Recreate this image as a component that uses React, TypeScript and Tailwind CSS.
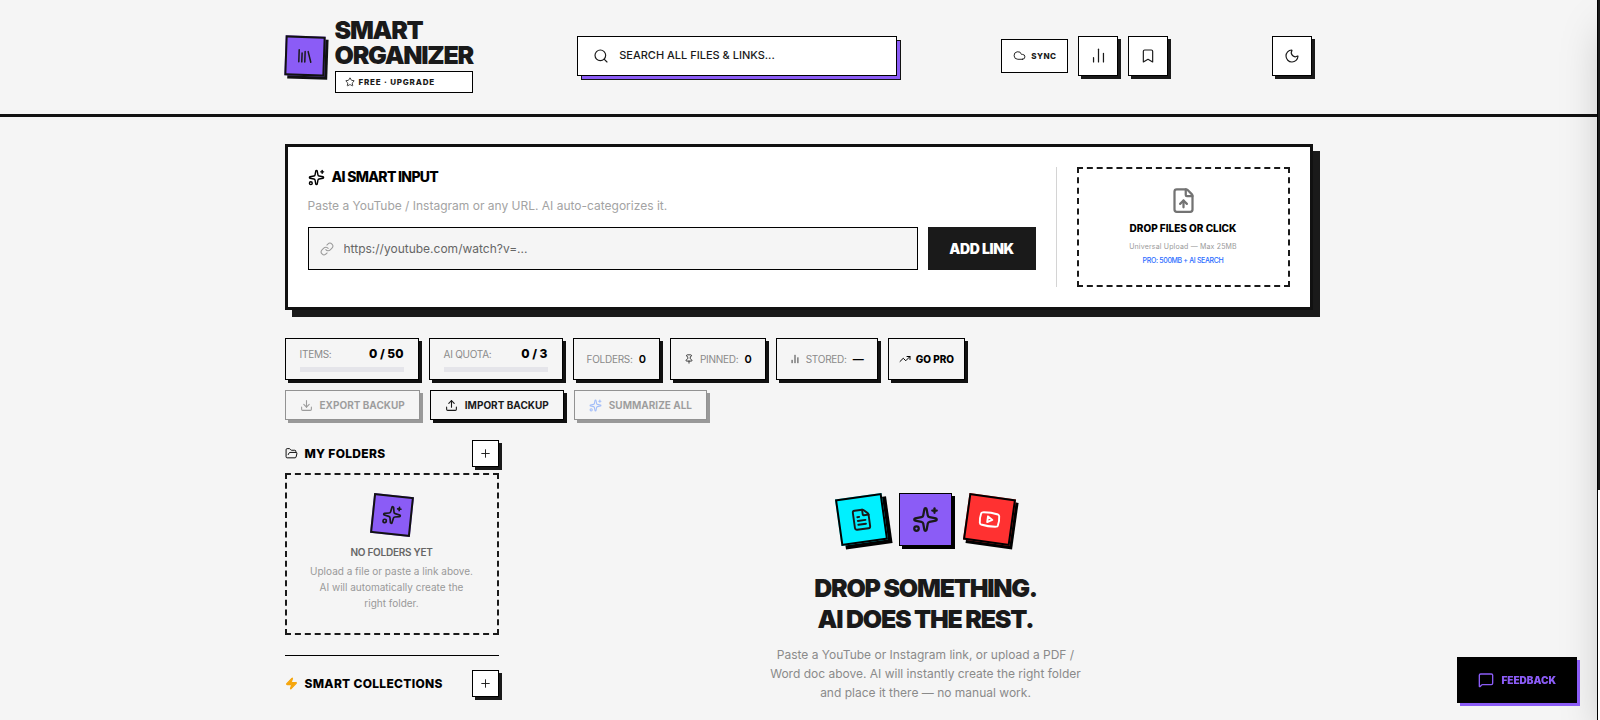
import type { ReactNode } from "react"
import {
  Bookmark,
  ChartNoAxesColumn,
  Cloud,
  Download,
  FileText,
  FileUp,
  FolderOpen,
  Library,
  Link,
  MessageSquare,
  Moon,
  Pin,
  Plus,
  Search,
  Sparkles,
  Star,
  TrendingUp,
  Upload,
  Youtube,
  Zap,
} from "lucide-react"

function IconButton({ label, children }: { label: string; children: ReactNode }) {
  return (
    <button
      type="button"
      aria-label={label}
      className="w-10 h-10 flex items-center justify-center bg-white border border-black shadow-[3px_3px_0_#1a1a1a]"
    >
      {children}
    </button>
  )
}

function Header() {
  return (
    <header className="border-b-3 border-[#111111] px-5">
      <div className="max-w-[1028px] mx-auto pt-[18px] pb-[21px] flex items-center justify-between">
        <div className="flex items-center gap-[10px]">
          <div className="w-10 h-10 rotate-2 flex items-center justify-center bg-[#8b5cf6] border-2 border-[#111111] shadow-[3px_3px_0_#111111]">
            <Library size={18} strokeWidth={2} />
          </div>
          <div>
            <h1 className="text-[25px] leading-[25px] font-black tracking-tighter">
              SMART
              <br />
              ORGANIZER
            </h1>
            <button
              type="button"
              className="mt-[3px] w-full h-[22px] px-[9px] flex items-center gap-1 bg-white border border-black text-[8px] font-extrabold tracking-widest"
            >
              <Star size={10} strokeWidth={2} />
              FREE · UPGRADE
            </button>
          </div>
        </div>

        <label className="w-80 h-10 px-[15px] flex items-center gap-[10px] bg-white border border-black shadow-[4px_4px_0_-1px_#8b5cf6,4px_4px_0_#111111]">
          <Search size={16} strokeWidth={1.75} />
          <input
            type="text"
            aria-label="Search all files and links"
            placeholder="SEARCH ALL FILES & LINKS..."
            className="flex-1 min-w-0 bg-transparent text-[11px] font-medium outline-none placeholder:text-[#1a1a1a]"
          />
        </label>

        <div className="flex items-center gap-[10px]">
          <button
            type="button"
            className="h-[34px] px-[11px] flex items-center gap-[5px] bg-white border border-black text-[8px] font-extrabold tracking-wider"
          >
            <Cloud size={13} strokeWidth={1.75} />
            SYNC
          </button>
          <IconButton label="Statistics">
            <ChartNoAxesColumn size={17} strokeWidth={1.75} />
          </IconButton>
          <IconButton label="Bookmarks">
            <Bookmark size={16} strokeWidth={1.75} />
          </IconButton>
        </div>

        <IconButton label="Dark mode">
          <Moon size={16} strokeWidth={1.75} />
        </IconButton>
      </div>
    </header>
  )
}

function SmartInput() {
  return (
    <section className="p-5 flex gap-5 bg-white border-3 border-[#111111] shadow-[7px_7px_0_#1a1a1a]">
      <form className="flex-1 min-w-0" onSubmit={(e) => e.preventDefault()}>
        <h2 className="flex items-center gap-[7px] text-sm leading-5 font-extrabold tracking-tighter text-black">
          <Sparkles size={17} strokeWidth={2} />
          AI SMART INPUT
        </h2>
        <p className="mt-[10px] text-xs leading-[18px] text-[#a3a3a3]">
          Paste a YouTube / Instagram or any URL. AI auto-categorizes it.
        </p>
        <div className="mt-3 flex gap-[10px]">
          <label className="flex-1 min-w-0 h-[43px] px-[11px] flex items-center gap-[10px] bg-[#f5f5f5] border border-black">
            <Link size={14} strokeWidth={1.75} className="text-[#999999]" />
            <input
              type="url"
              aria-label="Link to add"
              placeholder="https://youtube.com/watch?v=..."
              className="flex-1 min-w-0 bg-transparent text-xs outline-none placeholder:text-[#666666]"
            />
          </label>
          <button type="submit" className="w-[108px] h-[43px] bg-[#1a1a1a] text-white text-sm font-black tracking-tight">
            ADD LINK
          </button>
        </div>
      </form>
      <div className="pl-5 border-l border-[#d4d4d4]">
        <button
          type="button"
          className="w-[213px] h-[120px] flex flex-col items-center justify-center border-2 border-dashed border-[#1a1a1a]"
        >
          <FileUp size={27} strokeWidth={2} className="text-[#737373]" />
          <span className="mt-[6px] text-[10px] leading-4 font-extrabold text-black">DROP FILES OR CLICK</span>
          <span className="mt-[5px] text-[7px] leading-3 tracking-wide text-[#999999]">Universal Upload — Max 25MB</span>
          <span className="mt-[2px] text-[7px] leading-3 font-medium tracking-tighter text-[#2b6cff]">
            PRO: 500MB + AI SEARCH
          </span>
        </button>
      </div>
    </section>
  )
}

function Meter({ label, value }: { label: string; value: string }) {
  return (
    <div className="w-[134px] px-[14px] flex flex-col justify-center gap-[5px] border border-black shadow-[3px_3px_0_#111111]">
      <div className="flex items-center justify-between">
        <span className="text-[10px] leading-4 tracking-tight text-[#8a8a8a]">{label}</span>
        <span className="text-xs leading-4 font-extrabold text-black">{value}</span>
      </div>
      <div className="h-[5px] bg-[#e5e5ea]" />
    </div>
  )
}

function Stat({ icon, label, value }: { icon?: ReactNode; label: string; value: string }) {
  return (
    <div className="px-[13px] flex items-center gap-[6px] border border-black shadow-[3px_3px_0_#111111]">
      {icon}
      <span className="text-[10px] tracking-tight text-[#8a8a8a]">{label}</span>
      <span className="text-[11px] font-semibold text-black">{value}</span>
    </div>
  )
}

function ActionButton({ icon, label, disabled }: { icon: ReactNode; label: string; disabled?: boolean }) {
  return (
    <button
      type="button"
      disabled={disabled}
      className="h-[30px] px-[14px] flex items-center gap-[7px] border border-black shadow-[3px_3px_0_#111111] text-[10px] font-bold disabled:opacity-40"
    >
      {icon}
      {label}
    </button>
  )
}

function SidebarHeading({ icon, title, action }: { icon: ReactNode; title: string; action: string }) {
  return (
    <div className="flex items-center justify-between">
      <h2 className="flex items-center gap-[7px] text-xs font-extrabold tracking-wide text-black">
        {icon}
        {title}
      </h2>
      <button
        type="button"
        aria-label={action}
        className="w-[27px] h-[27px] flex items-center justify-center bg-white border border-black shadow-[3px_3px_0_#1a1a1a]"
      >
        <Plus size={13} strokeWidth={1.75} />
      </button>
    </div>
  )
}

function Sidebar() {
  return (
    <aside className="w-[214px] shrink-0">
      <SidebarHeading icon={<FolderOpen size={13} strokeWidth={1.75} />} title="MY FOLDERS" action="New folder" />
      <div className="mt-[6px] h-[162px] px-[23px] pb-[2px] flex flex-col items-center justify-center border-2 border-dashed border-[#1a1a1a] text-center">
        <div className="w-10 h-10 rotate-6 flex items-center justify-center bg-[#8b5cf6] border-2 border-[#111111]">
          <Sparkles size={20} strokeWidth={2} />
        </div>
        <h3 className="mt-[9px] text-[10px] leading-4 font-semibold tracking-tight text-[#666666]">NO FOLDERS YET</h3>
        <p className="mt-[3px] text-[10px] leading-4 text-[#999999]">
          Upload a file or paste a link above. AI will automatically create the right folder.
        </p>
      </div>
      <div className="mt-5 pt-[14px] border-t border-black">
        <SidebarHeading
          icon={<Zap size={13} className="fill-[#f5a50b] text-[#f5a50b]" />}
          title="SMART COLLECTIONS"
          action="New smart collection"
        />
      </div>
    </aside>
  )
}

function EmptyState() {
  return (
    <section className="flex-1 pt-[53px] flex flex-col items-center text-center">
      <div className="flex items-center gap-[14px]">
        <div className="w-[47px] h-[47px] -rotate-8 flex items-center justify-center bg-[#00f0ff] border-2 border-black shadow-[4px_4px_0_#000000]">
          <FileText size={23} strokeWidth={2} />
        </div>
        <div className="w-[53px] h-[53px] flex items-center justify-center bg-[#8b5cf6] border border-black shadow-[3px_3px_0_#000000]">
          <Sparkles size={27} strokeWidth={2} />
        </div>
        <div className="w-[47px] h-[47px] rotate-8 flex items-center justify-center bg-[#ff3131] border-2 border-black shadow-[3px_3px_0_#000000]">
          <Youtube size={23} strokeWidth={2} className="text-white" />
        </div>
      </div>
      <h2 className="mt-[27px] text-[25px] leading-[31px] font-black tracking-tighter">
        DROP SOMETHING.
        <br />
        AI DOES THE REST.
      </h2>
      <p className="mt-[10px] max-w-[320px] text-xs leading-[19px] text-[#8a8a8a]">
        Paste a YouTube or Instagram link, or upload a PDF / Word doc above. AI will instantly create the right folder
        and place it there — no manual work.
      </p>
    </section>
  )
}

export default function App() {
  return (
    <div className="min-h-screen pr-[3px] bg-[#f5f5f5] text-[#1a1a1a] font-['Inter','Liberation_Sans',sans-serif]">
      <Header />
      <main className="px-5">
        <div className="max-w-[1028px] mx-auto pt-[27px]">
          <SmartInput />
          <div className="mt-7 flex flex-wrap gap-[10px]">
            <Meter label="ITEMS:" value="0 / 50" />
            <Meter label="AI QUOTA:" value="0 / 3" />
            <Stat label="FOLDERS:" value="0" />
            <Stat icon={<Pin size={10} strokeWidth={2} />} label="PINNED:" value="0" />
            <Stat icon={<ChartNoAxesColumn size={10} strokeWidth={2} />} label="STORED:" value="—" />
            <button
              type="button"
              className="h-[42px] px-[10px] flex items-center gap-[5px] border border-black shadow-[3px_3px_0_#111111] text-[10px] font-extrabold text-black"
            >
              <TrendingUp size={12} strokeWidth={2} />
              GO PRO
            </button>
          </div>
          <div className="mt-[10px] flex flex-wrap gap-[10px]">
            <ActionButton icon={<Download size={13} strokeWidth={2} />} label="EXPORT BACKUP" disabled />
            <ActionButton icon={<Upload size={13} strokeWidth={2} />} label="IMPORT BACKUP" />
            <ActionButton
              icon={<Sparkles size={13} strokeWidth={2} className="text-[#2b6cff]" />}
              label="SUMMARIZE ALL"
              disabled
            />
          </div>
          <div className="mt-5 flex gap-10">
            <Sidebar />
            <EmptyState />
          </div>
        </div>
      </main>

      {/* closed drawer, only its edge and shadow reach into the window */}
      <div className="fixed inset-y-0 left-[calc(100%-3px)] w-80 bg-white border-l border-black shadow-[0_21px_42px_-10px_rgba(0,0,0,0.25)]" />
      <div className="fixed inset-y-0 right-0 w-[2px] bg-white">
        <div className="h-[68%] bg-[#1a1a1a]" />
      </div>

      <button
        type="button"
        className="fixed right-[23px] bottom-[17px] h-[46px] px-[21px] flex items-center gap-[7px] bg-black text-[#8b5cf6] text-[10px] font-black shadow-[3px_3px_0_#8b5cf6]"
      >
        <MessageSquare size={16} strokeWidth={2} />
        FEEDBACK
      </button>
    </div>
  )
}
